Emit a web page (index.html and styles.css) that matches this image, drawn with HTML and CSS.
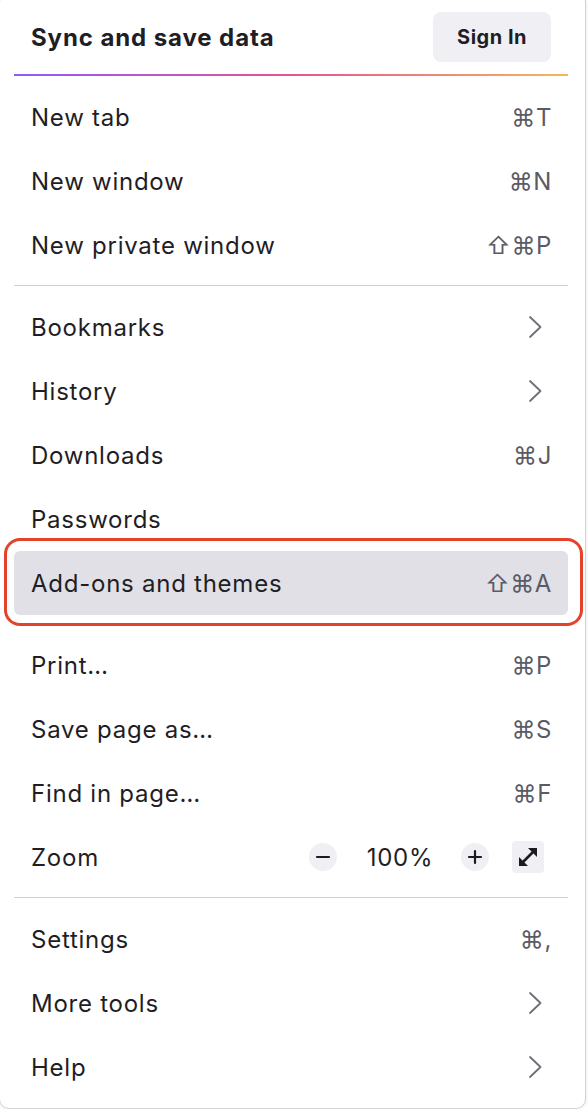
FILE: index.html
```html
<!DOCTYPE html>
<html lang="en">
<head>
<meta charset="utf-8">
<title>Menu</title>
<link rel="stylesheet" href="styles.css">
</head>
<body>
<div class="panel">
  <div class="header">
    <span class="title">Sync and save data</span>
    <button class="signin">Sign In</button>
  </div>
  <div class="gradient"></div>
  <div class="menu">
    <div class="item"><span class="label">New tab</span><span class="key">⌘T</span></div>
    <div class="item"><span class="label">New window</span><span class="key">⌘N</span></div>
    <div class="item"><span class="label">New private window</span><span class="key">⇧⌘P</span></div>
    <div class="sep"></div>
    <div class="item"><span class="label">Bookmarks</span><svg class="chev" viewBox="0 0 14 24" width="14" height="24"><path d="M2 2 L12.5 12 L2 22" fill="none" stroke="#6e6e76" stroke-width="1.8" stroke-linecap="round" stroke-linejoin="round"/></svg></div>
    <div class="item"><span class="label">History</span><svg class="chev" viewBox="0 0 14 24" width="14" height="24"><path d="M2 2 L12.5 12 L2 22" fill="none" stroke="#6e6e76" stroke-width="1.8" stroke-linecap="round" stroke-linejoin="round"/></svg></div>
    <div class="item"><span class="label">Downloads</span><span class="key">⌘J</span></div>
    <div class="item"><span class="label">Passwords</span></div>
    <div class="item active"><span class="label">Add-ons and themes</span><span class="key">⇧⌘A</span></div>
    <div class="item"><span class="label">Print…</span><span class="key">⌘P</span></div>
    <div class="item"><span class="label">Save page as…</span><span class="key">⌘S</span></div>
    <div class="item"><span class="label">Find in page…</span><span class="key">⌘F</span></div>
    <div class="item zoom">
      <span class="label">Zoom</span>
      <div class="zoomctl">
        <span class="circ"><svg viewBox="0 0 28 28" width="28" height="28"><path d="M8 14 H20" stroke="#1c1b22" stroke-width="2.2" stroke-linecap="round"/></svg></span>
        <span class="pct">100%</span>
        <span class="circ"><svg viewBox="0 0 28 28" width="28" height="28"><path d="M8 14 H20 M14 8 V20" stroke="#1c1b22" stroke-width="2.2" stroke-linecap="round"/></svg></span>
        <span class="full"><svg viewBox="0 0 32 32" width="32" height="32"><path d="M10.5 21.5 L21.5 10.5" stroke="#1c1b22" stroke-width="2.6"/><path d="M25 7 L25 16 L16 7 Z" fill="#1c1b22"/><path d="M7 25 L7 16 L16 25 Z" fill="#1c1b22"/></svg></span>
      </div>
    </div>
    <div class="sep"></div>
    <div class="item"><span class="label">Settings</span><span class="key">⌘,</span></div>
    <div class="item"><span class="label">More tools</span><svg class="chev" viewBox="0 0 14 24" width="14" height="24"><path d="M2 2 L12.5 12 L2 22" fill="none" stroke="#6e6e76" stroke-width="1.8" stroke-linecap="round" stroke-linejoin="round"/></svg></div>
    <div class="item"><span class="label">Help</span><svg class="chev" viewBox="0 0 14 24" width="14" height="24"><path d="M2 2 L12.5 12 L2 22" fill="none" stroke="#6e6e76" stroke-width="1.8" stroke-linecap="round" stroke-linejoin="round"/></svg></div>
  </div>
</div>
</body>
</html>
```
FILE: styles.css
```css
html, body {
  margin: 0;
  padding: 0;
  background: #ffffff;
}
body {
  font-family: Inter, "Noto Sans", "DejaVu Sans", sans-serif;
  color: #1f1e25;
  overflow: hidden;
}
.panel {
  box-sizing: border-box;
  width: 587px;
  margin-left: -1px;
  margin-top: -8px;
  height: 1117px;
  border: 1px solid #d3d3d8;
  border-radius: 10px;
  box-shadow: 0 0 3px rgba(0, 0, 0, 0.12);
  background: #fff;
  padding: 0 17px 0 14px;
}
.header {
  display: flex;
  align-items: center;
  justify-content: space-between;
  padding: 19px 17px 12px 17px;
}
.title {
  font-size: 24px;
  font-weight: 700;
  letter-spacing: 0.9px;
}
.signin {
  width: 118px;
  height: 50px;
  border: none;
  border-radius: 8px;
  background: #f0f0f4;
  font-family: Inter, "Noto Sans", sans-serif;
  font-size: 20px;
  font-weight: 700;
  letter-spacing: 0.5px;
  color: #1f1e25;
  padding: 0;
}
.gradient {
  height: 2px;
  background: linear-gradient(90deg, #9059ff 0%, #e45592 50%, #f4b75a 100%);
}
.menu {
  padding-top: 9px;
}
.item {
  position: relative;
  display: flex;
  align-items: center;
  justify-content: space-between;
  height: 64px;
  padding: 0 17px;
  font-size: 24px;
  letter-spacing: 0.75px;
}
.key {
  color: #5b5b66;
  font-family: Inter, "DejaVu Sans", sans-serif;
  letter-spacing: 0.6px;
  margin-right: -1px;
}
.chev {
  margin-right: 9px;
  display: block;
}
.sep {
  height: 1px;
  background: #cfcfd4;
  margin: 8px 0 9px;
}
.active {
  background: #e0e0e6;
  border-radius: 6px;
  margin-bottom: 18px;
}
.active::after {
  content: "";
  position: absolute;
  left: -10px;
  right: -15px;
  top: -13px;
  bottom: -11px;
  border: 3px solid #e4432b;
  border-radius: 16px;
}
.zoomctl {
  display: flex;
  align-items: center;
  margin-right: 7px;
}
.circ {
  width: 28px;
  height: 28px;
  border-radius: 50%;
  background: #f0f0f4;
  display: flex;
}
.pct {
  width: 124px;
  text-align: center;
  padding-left: 2px;
  box-sizing: border-box;
}
.full {
  margin-left: 23px;
  width: 32px;
  height: 32px;
  border-radius: 4px;
  background: #f0f0f4;
  display: flex;
}
```
